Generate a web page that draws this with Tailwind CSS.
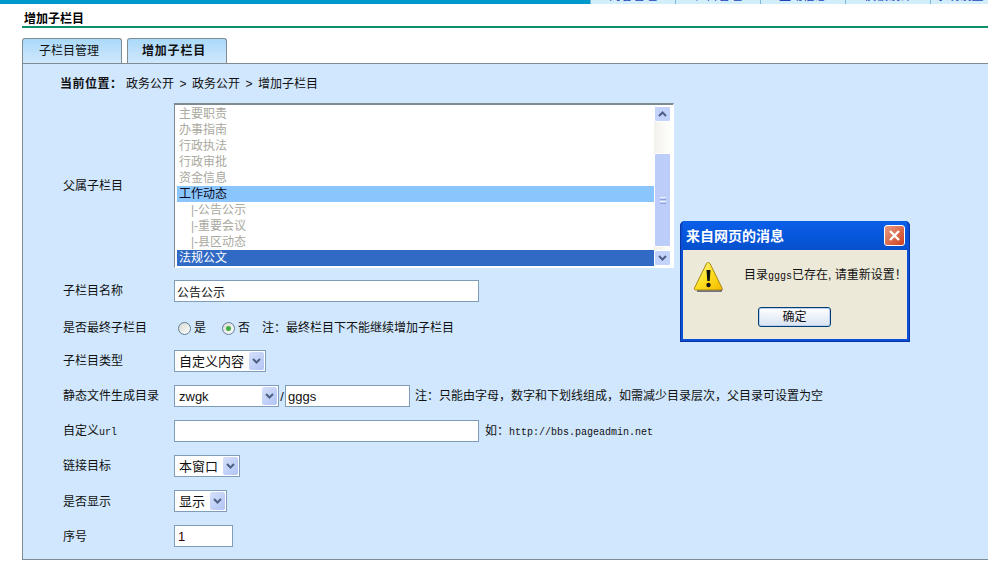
<!DOCTYPE html>
<html lang="zh-CN">
<head>
    <meta charset="UTF-8">
    <title>增加子栏目</title>
    <script src="https://cdn.jsdelivr.net/npm/@tailwindcss/browser@4"></script>
</head>
<body class="relative h-[569px] w-[988px] overflow-hidden bg-white font-['Liberation_Sans','Noto_Sans_CJK_SC',sans-serif] text-[12px] leading-none text-[#111]">

    <!-- Top bar -->
    <div class="flex h-1 bg-[#0099cc]">
        <div class="w-[590px]"></div>
        <div class="flex h-1 w-[85px] items-end justify-center overflow-hidden border-l border-[#7fb6dc] bg-[#d3eefb] pb-0.5 text-[#2244bb]">内容管理</div>
        <div class="flex h-1 w-[85px] items-end justify-center overflow-hidden border-l border-[#7fb6dc] bg-[#d3eefb] pb-0.5 text-[#2244bb]">栏目管理</div>
        <div class="flex h-1 w-[85px] items-end justify-center overflow-hidden border-l border-[#7fb6dc] bg-[#d3eefb] pb-0.5 text-[#2244bb]">互动信息</div>
        <div class="flex h-1 w-[85px] items-end justify-center overflow-hidden border-l border-[#7fb6dc] bg-[#d3eefb] pb-0.5 text-[#2244bb]">模板设计</div>
        <div class="flex h-1 w-[58px] items-end justify-center overflow-hidden border-l border-[#7fb6dc] bg-[#d3eefb] pb-0.5 text-[#2244bb]">系统设置</div>
    </div>

    <!-- Page title -->
    <div class="ml-[22px] flex h-[24px] items-end border-b-2 border-[#0f8f6c] pb-px pl-0.5 font-bold text-black">增加子栏目</div>

    <!-- Tabs -->
    <div class="ml-[22px] mt-[10px] flex h-[25px] gap-[5px]">
        <div class="flex w-[100px] items-center justify-center rounded-t-[3px] border border-b-0 border-[#7f8c93] bg-gradient-to-b from-[#a9d9f9] to-[#d0e8fd] pr-[6px]">子栏目管理</div>
        <div class="flex w-[100px] items-center justify-center rounded-t-[3px] border border-b-0 border-[#7f8c93] bg-gradient-to-b from-[#a9d9f9] to-[#d0e8fd] pr-[6px] font-bold tracking-[0.8px]">增加子栏目</div>
    </div>

    <!-- Panel -->
    <div class="ml-[22px] h-[497px] border-b border-l border-t border-[#7f8c93] bg-[#d0e7fd] pl-[40px]">
        <div class="flex h-[39px] items-center">
            <span class="-ml-[3px] w-[66px] font-bold tracking-[0.5px]">当前位置：</span>
            <span>政务公开</span>
            <span class="w-[18px] text-center">&gt;</span>
            <span>政务公开</span>
            <span class="w-[18px] text-center">&gt;</span>
            <span>增加子栏目</span>
        </div>

        <div class="flex flex-col gap-[13px]">
            <!-- Parent list -->
            <div class="flex h-[165px] items-center">
                <div class="w-[111px]">父属子栏目</div>
                <div class="flex h-[165px] w-[500px] justify-between border border-t-2 border-[#7d8a8f] border-b-white border-r-white bg-white px-0.5 pt-px">
                    <div class="flex w-[477px] flex-col text-[#aaa9a0]">
                        <div class="flex h-4 shrink-0 items-center pl-0.5">主要职责</div>
                        <div class="flex h-4 shrink-0 items-center pl-0.5">办事指南</div>
                        <div class="flex h-4 shrink-0 items-center pl-0.5">行政执法</div>
                        <div class="flex h-4 shrink-0 items-center pl-0.5">行政审批</div>
                        <div class="flex h-4 shrink-0 items-center pl-0.5">资金信息</div>
                        <div class="flex h-4 shrink-0 items-center bg-[#8ac6fd] pl-0.5 text-[#0a0a20]">工作动态</div>
                        <div class="flex h-4 shrink-0 items-center pl-[14px]">|-公告公示</div>
                        <div class="flex h-4 shrink-0 items-center pl-[14px]">|-重要会议</div>
                        <div class="flex h-4 shrink-0 items-center pl-[14px]">|-县区动态</div>
                        <div class="flex h-4 shrink-0 items-center bg-[#316ac5] pl-0.5 text-white">法规公文</div>
                    </div>
                    <!-- Scrollbar -->
                    <div class="flex h-[160px] w-[17px] flex-col bg-gradient-to-r from-[#f3f1ec] to-[#fefefb]">
                        <div class="flex h-[16px] shrink-0 items-center justify-center rounded-[2px] border border-white bg-[#c3d3fb]">
                            <svg width="9" height="6" viewBox="0 0 9 6"><path d="M1 5l3.5-3.5L8 5" fill="none" stroke="#4d6185" stroke-width="2"/></svg>
                        </div>
                        <div class="h-[31px] shrink-0"></div>
                        <div class="flex h-[94px] shrink-0 items-center justify-center rounded-[2px] border border-white bg-[#bccdf9]">
                            <div class="flex flex-col gap-px">
                                <div class="h-px w-[6px] bg-[#eef3fe]"></div>
                                <div class="h-px w-[6px] bg-[#8ba2dc]"></div>
                                <div class="h-px w-[6px] bg-[#eef3fe]"></div>
                                <div class="h-px w-[6px] bg-[#8ba2dc]"></div>
                            </div>
                        </div>
                        <div class="h-[3px] shrink-0"></div>
                        <div class="flex h-[16px] shrink-0 items-center justify-center rounded-[2px] border border-white bg-[#c3d3fb]">
                            <svg width="9" height="6" viewBox="0 0 9 6"><path d="M1 1l3.5 3.5L8 1" fill="none" stroke="#4d6185" stroke-width="2"/></svg>
                        </div>
                    </div>
                </div>
            </div>

            <!-- Name -->
            <div class="-mt-px flex h-[22px] items-center">
                <div class="w-[111px]">子栏目名称</div>
                <input type="text" value="公告公示" class="h-[22px] w-[305px] border border-[#7f9db9] bg-white px-0.5 text-[12px] outline-none">
            </div>

            <!-- Final column -->
            <div class="flex h-[22px] items-center pt-1">
                <div class="w-[111px]">是否最终子栏目</div>
                <div class="ml-1 flex items-center">
                    <span class="size-[13px] rounded-full border border-[#5f7f9d] bg-gradient-to-br from-[#d8d8d0] to-white"></span>
                    <span class="ml-[3px]">是</span>
                    <span class="ml-4 flex size-[13px] items-center justify-center rounded-full border border-[#5f7f9d] bg-gradient-to-br from-[#d8d8d0] to-white"><span class="size-[5px] rounded-full bg-[#3fae3f]"></span></span>
                    <span class="ml-[3px]">否</span>
                    <span class="ml-3">注：最终栏目下不能继续增加子栏目</span>
                </div>
            </div>

            <!-- Type -->
            <div class="flex h-[22px] items-center">
                <div class="w-[111px]">子栏目类型</div>
                <div class="flex h-[22px] w-[92px] items-center border border-[#7f9db9] bg-white pl-[4px] pr-px">
                    <span class="flex-1 text-[13px]">自定义内容</span>
                    <span class="flex h-[18px] w-[15px] items-center justify-center rounded-[2px] bg-gradient-to-br from-[#d5e0fb] to-[#b2c4f4]">
                        <svg width="9" height="6" viewBox="0 0 9 6"><path d="M1 1l3.5 3.5L8 1" fill="none" stroke="#4d6185" stroke-width="2"/></svg>
                    </span>
                </div>
            </div>

            <!-- Static dir -->
            <div class="flex h-[22px] items-center">
                <div class="w-[111px]">静态文件生成目录</div>
                <div class="flex h-[22px] w-[105px] items-center border border-[#7f9db9] bg-white pl-[4px] pr-px">
                    <span class="flex-1 text-[13px]">zwgk</span>
                    <span class="flex h-[18px] w-[15px] items-center justify-center rounded-[2px] bg-gradient-to-br from-[#d5e0fb] to-[#b2c4f4]">
                        <svg width="9" height="6" viewBox="0 0 9 6"><path d="M1 1l3.5 3.5L8 1" fill="none" stroke="#4d6185" stroke-width="2"/></svg>
                    </span>
                </div>
                <span class="w-[6px] text-center text-[13px]">/</span>
                <input type="text" value="gggs" class="h-[22px] w-[125px] border border-[#7f9db9] bg-white px-0.5 text-[13px] outline-none">
                <span class="ml-[5px]">注：只能由字母，数字和下划线组成，如需减少目录层次，父目录可设置为空</span>
            </div>

            <!-- Custom url -->
            <div class="flex h-[22px] items-center">
                <div class="w-[111px]">自定义<span class="font-['Liberation_Mono',monospace] text-[10px]">url</span></div>
                <input type="text" class="h-[22px] w-[305px] border border-[#7f9db9] bg-white px-0.5 outline-none">
                <span class="ml-[6px]">如：<span class="font-['Liberation_Mono',monospace] text-[10px]">http://bbs.pageadmin.net</span></span>
            </div>

            <!-- Link target -->
            <div class="flex h-[22px] items-center">
                <div class="w-[111px]">链接目标</div>
                <div class="flex h-[22px] w-[66px] items-center border border-[#7f9db9] bg-white pl-[4px] pr-px">
                    <span class="flex-1 text-[13px]">本窗口</span>
                    <span class="flex h-[18px] w-[15px] items-center justify-center rounded-[2px] bg-gradient-to-br from-[#d5e0fb] to-[#b2c4f4]">
                        <svg width="9" height="6" viewBox="0 0 9 6"><path d="M1 1l3.5 3.5L8 1" fill="none" stroke="#4d6185" stroke-width="2"/></svg>
                    </span>
                </div>
            </div>

            <!-- Visible -->
            <div class="flex h-[22px] items-center">
                <div class="w-[111px] pt-0.5">是否显示</div>
                <div class="flex h-[22px] w-[53px] items-center border border-[#7f9db9] bg-white pl-[4px] pr-px">
                    <span class="flex-1 text-[13px]">显示</span>
                    <span class="flex h-[18px] w-[15px] items-center justify-center rounded-[2px] bg-gradient-to-br from-[#d5e0fb] to-[#b2c4f4]">
                        <svg width="9" height="6" viewBox="0 0 9 6"><path d="M1 1l3.5 3.5L8 1" fill="none" stroke="#4d6185" stroke-width="2"/></svg>
                    </span>
                </div>
            </div>

            <!-- Order -->
            <div class="flex h-[22px] items-center">
                <div class="w-[111px] pt-0.5">序号</div>
                <input type="text" value="1" class="h-[22px] w-[59px] border border-[#7f9db9] bg-white px-[3px] text-[13px] text-[#300] outline-none">
            </div>
        </div>
    </div>

    <!-- Alert dialog -->
    <div class="absolute left-[680px] top-[221px] flex h-[121px] w-[230px] flex-col rounded-t-[5px] bg-[#0a4fd6] p-[3px] pt-0 shadow-[inset_0_0_0_1px_#0835a0]">
        <div class="flex h-[29px] items-center justify-between bg-gradient-to-b from-[#0a5fe8] via-[#0757dc] to-[#0650cc] pl-[3px] pr-[2px] text-[14px] font-bold text-white">
            <span>来自网页的消息</span>
            <span class="flex size-[21px] items-center justify-center rounded-[3px] border border-white bg-gradient-to-br from-[#e99a80] to-[#cc3c1c]">
                <svg width="13" height="13" viewBox="0 0 13 13"><path d="M2 2l9 9M11 2l-9 9" stroke="#fff" stroke-width="2.4"/></svg>
            </span>
        </div>
        <div class="relative flex-1 bg-[#ece9d8]">
            <svg class="absolute left-[9px] top-[11px]" width="32" height="32" viewBox="0 0 32 32">
                <defs>
                    <linearGradient id="warn" x1="0" y1="0" x2="1" y2="1">
                        <stop offset="0" stop-color="#fff9a8"/>
                        <stop offset="0.5" stop-color="#ffe020"/>
                        <stop offset="1" stop-color="#f2b800"/>
                    </linearGradient>
                </defs>
                <path d="M5 30h24l1-2" fill="none" stroke="#4a4a70" stroke-width="1.500"/>
                <path d="M14.500 2.500c1-1.200 2.500-1.200 3.500 0l12 24.500c.5 1.300 0 2-1.500 2H4c-1.500 0-2-.7-1.500-2z" fill="url(#warn)" stroke="#a88a10" stroke-width="1"/>
                <path d="M14.500 9h4l-.8 11h-2.400z" fill="#111"/>
                <circle cx="16.500" cy="24" r="2.200" fill="#111"/>
            </svg>
            <div class="absolute left-[61px] top-[19px] whitespace-nowrap">目录<span class="font-['Liberation_Mono',monospace] text-[10px]">gggs</span>已存在, 请重新设置！</div>
            <button class="absolute left-[75px] top-[57px] h-[20px] w-[73px] rounded-[3px] border border-[#003c74] bg-gradient-to-b from-white to-[#d8e2f2] shadow-[inset_0_0_0_1px_#b8d0f0] text-[12px]">确定</button>
        </div>
    </div>

</body>
</html>
